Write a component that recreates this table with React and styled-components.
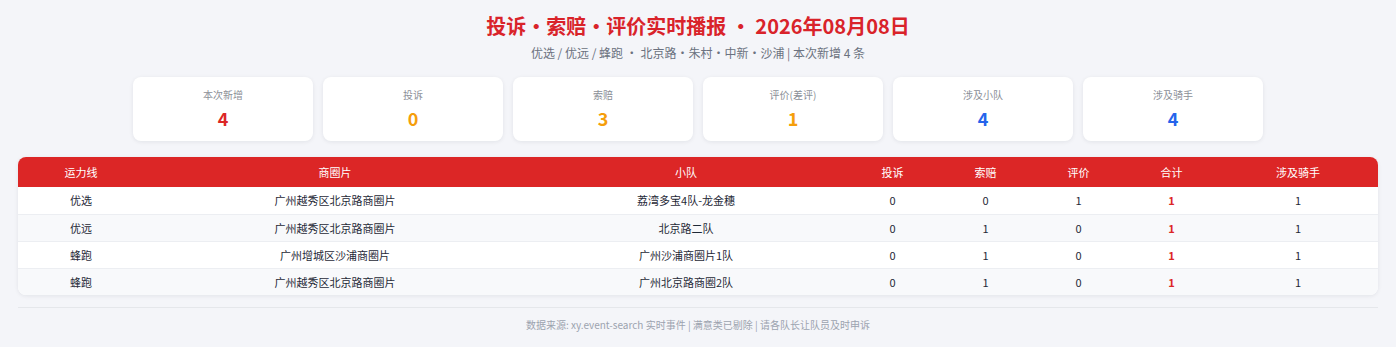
import React from 'react';
import styled, { createGlobalStyle } from 'styled-components';

const GlobalStyle = createGlobalStyle`
    * { box-sizing: border-box; }
    body {
        margin: 0;
        background: #f4f5f9;
        font-family: "Noto Sans CJK SC", "Noto Sans", sans-serif;
        color: #1f2937;
    }
`;

const stats = [
    { label: '本次新增', value: 4, color: '#dc2626' },
    { label: '投诉', value: 0, color: '#f59e0b' },
    { label: '索赔', value: 3, color: '#f59e0b' },
    { label: '评价(差评)', value: 1, color: '#f59e0b' },
    { label: '涉及小队', value: 4, color: '#2563eb' },
    { label: '涉及骑手', value: 4, color: '#2563eb' },
];

const columns = [
    { title: '运力线', width: 126 },
    { title: '商圈片', width: 382 },
    { title: '小队', width: 320 },
    { title: '投诉', width: 93 },
    { title: '索赔', width: 93 },
    { title: '评价', width: 93 },
    { title: '合计', width: 93 },
    { title: '涉及骑手', width: 160 },
];

const rows = [
    ['优选', '广州越秀区北京路商圈片', '荔湾多宝4队-龙金穗', 0, 0, 1, 1, 1],
    ['优远', '广州越秀区北京路商圈片', '北京路二队', 0, 1, 0, 1, 1],
    ['蜂跑', '广州增城区沙浦商圈片', '广州沙浦商圈片1队', 0, 1, 0, 1, 1],
    ['蜂跑', '广州越秀区北京路商圈片', '广州北京路商圈2队', 0, 1, 0, 1, 1],
];

function Dashboard() {
    return (
        <Page>
            <Header>
                <Title>投诉・索赔・评价实时播报 ・ 2026年08月08日</Title>
                <Subtitle>优选 / 优远 / 蜂跑 · 北京路・朱村・中新・沙浦 | 本次新增 4 条</Subtitle>
            </Header>
            <Cards>
                {stats.map((s) => (
                    <Card key={s.label}>
                        <CardLabel>{s.label}</CardLabel>
                        <CardValue color={s.color}>{s.value}</CardValue>
                    </Card>
                ))}
            </Cards>
            <TableWrap>
                <Table>
                    <colgroup>
                        {columns.map((c) => <col key={c.title} style={{ width: c.width }} />)}
                    </colgroup>
                    <thead>
                        <tr>
                            {columns.map((c) => <Th key={c.title}>{c.title}</Th>)}
                        </tr>
                    </thead>
                    <tbody>
                        {rows.map((r, i) => (
                            <Row key={i}>
                                {r.map((cell, j) => (
                                    <Td key={j} $total={j === 6}>{cell}</Td>
                                ))}
                            </Row>
                        ))}
                    </tbody>
                </Table>
            </TableWrap>
            <Footer>数据来源: xy.event-search 实时事件 | 满意类已剔除 | 请各队长让队员及时申诉</Footer>
        </Page>
    );
}

const Page = styled.div`
    padding: 10px 18px 0;
`;

const Header = styled.header`
    text-align: center;
`;

const Title = styled.h1`
    margin: 0;
    font-size: 20px;
    line-height: 32px;
    font-weight: 700;
    color: #d9232a;
`;

const Subtitle = styled.div`
    margin-top: 2px;
    font-size: 12px;
    line-height: 18px;
    color: #6b7280;
`;

const Cards = styled.div`
    display: grid;
    grid-template-columns: repeat(6, 180px);
    justify-content: center;
    gap: 10px;
    margin-top: 15px;
`;

const Card = styled.div`
    height: 64px;
    background: #fff;
    border-radius: 8px;
    box-shadow: 0 1px 4px rgba(15, 23, 42, 0.08);
    display: flex;
    flex-direction: column;
    align-items: center;
    padding-top: 11px;
`;

const CardLabel = styled.div`
    font-size: 10px;
    line-height: 14px;
    color: #8b8f97;
`;

const CardValue = styled.div`
    margin-top: 4px;
    font-size: 18px;
    line-height: 24px;
    font-weight: 700;
    color: ${(p) => p.color};
`;

const TableWrap = styled.div`
    margin-top: 16px;
    background: #fff;
    border-radius: 8px;
    overflow: hidden;
    box-shadow: 0 1px 4px rgba(15, 23, 42, 0.08);
`;

const Table = styled.table`
    width: 100%;
    table-layout: fixed;
    border-collapse: collapse;
    font-size: 11px;
`;

const Th = styled.th`
    height: 30px;
    padding: 0;
    background: #dc2626;
    color: #fff;
    font-weight: 400;
    text-align: center;
`;

const Row = styled.tr`
    background: #fff;
    &:nth-child(even) { background: #f8f9fb; }
    & + & td { border-top: 1px solid #eceef2; }
`;

const Td = styled.td`
    height: 27px;
    padding: 0;
    text-align: center;
    color: ${(p) => (p.$total ? '#dc2626' : '#1f2937')};
    font-weight: ${(p) => (p.$total ? 700 : 400)};
`;

const Footer = styled.footer`
    margin-top: 12px;
    border-top: 1px solid #e5e7eb;
    padding-top: 9px;
    text-align: center;
    font-size: 10px;
    line-height: 16px;
    color: #9ca3af;
`;

export default function App() {
    return (
        <>
            <GlobalStyle />
            <Dashboard />
        </>
    );
}
